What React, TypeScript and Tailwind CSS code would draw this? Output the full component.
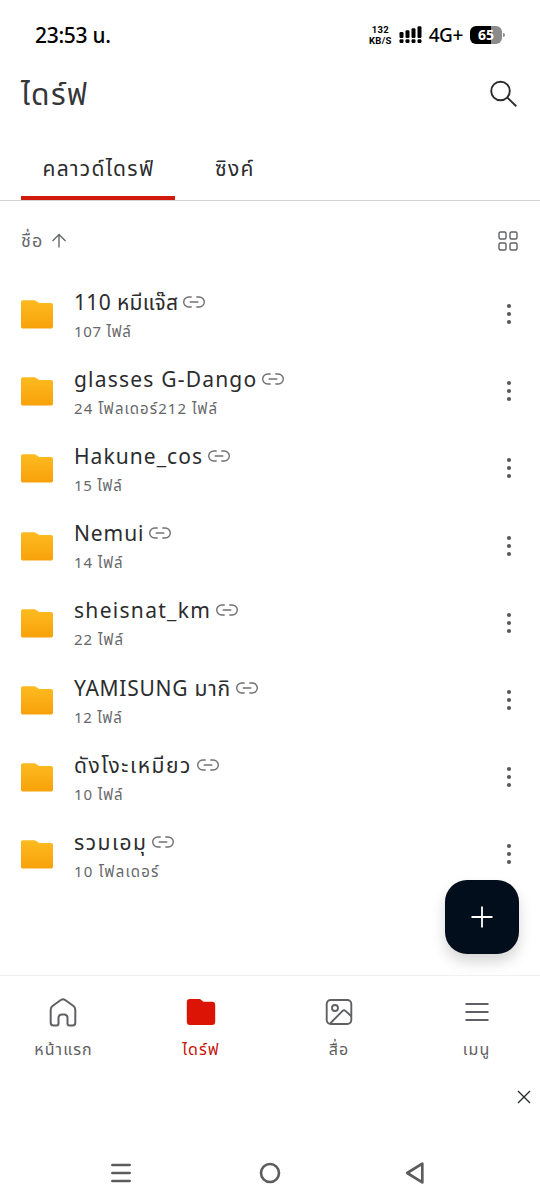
import React from "react";

type DriveFolder = {
    name: string;
    info: string;
    nameClass: string;
    infoClass: string;
};

const folders: DriveFolder[] = [
    { name: "110 หมีแจ๊ส", info: "107 ไฟล์", nameClass: "tracking-[0.35px]", infoClass: "tracking-[0.7px]" },
    { name: "glasses G-Dango", info: "24 โฟลเดอร์212 ไฟล์", nameClass: "tracking-[1.2px]", infoClass: "tracking-[1.05px]" },
    { name: "Hakune_cos", info: "15 ไฟล์", nameClass: "tracking-[1.05px]", infoClass: "tracking-[0.75px]" },
    { name: "Nemui", info: "14 ไฟล์", nameClass: "tracking-[0.9px]", infoClass: "tracking-[0.9px]" },
    { name: "sheisnat_km", info: "22 ไฟล์", nameClass: "tracking-[1.3px]", infoClass: "tracking-[1px]" },
    { name: "YAMISUNG มากิ", info: "12 ไฟล์", nameClass: "tracking-[0.75px]", infoClass: "tracking-[0.75px]" },
    { name: "ดังโงะเหมียว", info: "10 ไฟล์", nameClass: "tracking-[1.55px]", infoClass: "tracking-[0.9px]" },
    { name: "รวมเอมุ", info: "10 โฟลเดอร์", nameClass: "tracking-[1.5px]", infoClass: "tracking-[1.2px]" },
];

function FolderIcon() {
    return (
        <svg width="32" height="29" viewBox="0 0 32 29" className="shrink-0">
            <defs>
                <linearGradient id="folder" x1="0" y1="0" x2="0" y2="1">
                    <stop offset="0" stopColor="#fdbb1f" />
                    <stop offset="1" stopColor="#f8a10a" />
                </linearGradient>
            </defs>
            <path
                fill="url(#folder)"
                d="M2 0.3H13.2C14 0.3 14.6 0.5 15.2 1L17.4 2.4C18 2.9 18.5 3 19.3 3H30C31.2 3 32 3.8 32 5V26.5C32 27.8 31.2 28.6 30 28.6H2C0.8 28.6 0 27.8 0 26.5V2.3C0 1.1 0.8 0.3 2 0.3Z"
            />
        </svg>
    );
}

function LinkIcon() {
    return (
        <svg width="22" height="12" viewBox="0 0 22 12" fill="none" stroke="#6f7072" strokeWidth="1.4" strokeLinecap="round" className="shrink-0">
            <path d="M8.2 1H5.7a5 5 0 0 0 0 10H8.2M13.8 1h2.5a5 5 0 0 1 0 10H13.8M7.2 6h7.6" />
        </svg>
    );
}

function FolderRow({ folder }: { folder: DriveFolder }) {
    return (
        <li className="flex h-[77.2px] items-start pl-[21px] pr-7">
            <div className="pt-[24.4px]">
                <FolderIcon />
            </div>
            <div className="ml-[21px] flex-1 whitespace-nowrap">
                <div className="mt-[11px] flex h-[30px] items-center gap-[5px]">
                    <span className={`text-[21px] leading-[30px] text-[#2b2c2e] ${folder.nameClass}`}>{folder.name}</span>
                    <LinkIcon />
                </div>
                <p className={`text-[15px] leading-[28px] text-[#66676a] ${folder.infoClass}`}>{folder.info}</p>
            </div>
            <svg width="6" height="22" viewBox="0 0 6 22" fill="#58595c" className="mt-[27.4px]">
                <circle cx="3" cy="3" r="2.1" />
                <circle cx="3" cy="11" r="2.1" />
                <circle cx="3" cy="19" r="2.1" />
            </svg>
        </li>
    );
}

function StatusBar() {
    return (
        <div className="flex h-[70px] items-center pl-[35px] pr-[35px] text-black">
            <span className="text-[21px] font-medium leading-none tracking-[-0.3px]">23:53 น.</span>
            <div className="ml-auto flex items-center">
                <div className="text-center font-['Roboto',sans-serif] text-[9.5px] font-bold leading-[11px] tracking-[0.3px]">
                    <div>132</div>
                    <div>KB/S</div>
                </div>
                <svg width="23" height="18" viewBox="0 0 23 18" className="ml-[7px]">
                    <rect x="0.5" y="6" width="4" height="6" rx="1.2" />
                    <rect x="6.5" y="4.3" width="4" height="7.7" rx="1.2" />
                    <rect x="12.5" y="2.2" width="4" height="9.8" rx="1.2" />
                    <rect x="18.5" y="0.3" width="4" height="11.7" rx="1.2" />
                    <rect x="0.5" y="13.3" width="4" height="3.6" rx="1.2" />
                    <rect x="6.5" y="13.3" width="4" height="3.6" rx="1.2" />
                    <rect x="12.5" y="13.3" width="4" height="3.6" rx="1.2" />
                    <rect x="18.5" y="13.3" width="4" height="3.6" rx="1.2" />
                </svg>
                <span className="ml-[7px] text-[19px] font-medium leading-none tracking-[-0.4px]">4G+</span>
                <div className="ml-[7px] flex h-[18px] w-[32px] items-center justify-center rounded-[6px] bg-linear-to-r from-black from-65% to-[#8b8b8b] to-65% text-[14px] font-bold leading-none text-white">
                    65
                </div>
                <div className="ml-px h-1 w-[2px] rounded-r-full bg-[#8b8b8b]" />
            </div>
        </div>
    );
}

function BottomNav() {
    return (
        <nav className="-mx-[6px] grid h-[100px] grid-cols-4 border-t border-[#f0f0f0] text-[16px] leading-6 tracking-[1.1px] text-[#5f6063]">
            <div className="flex flex-col items-center pt-[22px]">
                <svg width="28" height="30" viewBox="0 0 28 30" fill="none" stroke="currentColor" strokeWidth="2" strokeLinejoin="round">
                    <path d="M12.2 1.8Q14 .7 15.8 1.8L24.5 8Q26.3 9.4 26.3 11.5V24.8Q26.3 27.6 23.5 27.6H20.5Q18.5 27.6 18.5 25.6V20Q18.5 16.5 15 16.5H13Q9.5 16.5 9.5 20V25.6Q9.5 27.6 7.5 27.6H4.5Q1.7 27.6 1.7 24.8V11.5Q1.7 9.4 3.5 8Z" />
                </svg>
                <span className="mt-[9px] pl-px">หน้าแรก</span>
            </div>
            <div className="flex flex-col items-center pt-[22px] text-[#c4150c]">
                <svg width="30" height="30" viewBox="0 0 30 30" fill="#dc1405">
                    <path d="M4 1H13.2Q14.5 1 15.3 2L16.3 3Q17 3.8 18.2 3.8H26Q29.2 3.8 29.2 7V23.5Q29.2 27 26 27H4Q.8 27 .8 23.5V4.3Q.8 1 4 1Z" />
                </svg>
                <span className="mt-[9px]">ไดร์ฟ</span>
            </div>
            <div className="flex flex-col items-center pt-[22px]">
                <svg width="28" height="30" viewBox="0 0 28 30" fill="none" stroke="currentColor" strokeWidth="1.9" strokeLinecap="round" strokeLinejoin="round">
                    <rect x="1.7" y="2" width="24.6" height="24" rx="4" />
                    <circle cx="10" cy="10" r="3" />
                    <path d="M5.6 25L17.6 12.9Q19 11.6 20.4 12.9L26 18" />
                </svg>
                <span className="mt-[9px]">สื่อ</span>
            </div>
            <div className="flex flex-col items-center pr-px pt-[22px]">
                <svg width="24" height="30" viewBox="0 0 24 30" fill="none" stroke="currentColor" strokeWidth="1.9">
                    <path d="M0.5 6H23.5M0.5 14H23.5M0.5 22H23.5" />
                </svg>
                <span className="mt-[9px]">เมนู</span>
            </div>
        </nav>
    );
}

export default function App() {
    return (
        <div className="flex h-[1200px] w-[540px] flex-col overflow-hidden bg-white font-['Noto_Sans','Noto_Sans_Thai',sans-serif]">
            <StatusBar />

            <header className="flex h-[66px] items-start justify-between pl-[21px] pr-[22px]">
                <h1 className="mt-[3px] text-[30px] leading-[42px] tracking-[1.3px] text-[#353638]">ไดร์ฟ</h1>
                <svg width="29" height="29" viewBox="0 0 29 29" fill="none" stroke="#2b2c2e" strokeWidth="1.9" className="mt-[10px]">
                    <circle cx="11.5" cy="11" r="9.3" />
                    <path d="M18.3 17.6L27.3 26.3" />
                </svg>
            </header>

            <div className="flex h-[65px] border-b border-[#d3d3d3] pl-[21px] text-[21px] leading-[64px] tracking-[1.3px] text-[#2b2c2e]">
                <div className="w-[154px] border-b-4 border-[#d11a0c] pl-px text-center">คลาวด์ไดรฟ์</div>
                <div className="ml-[40px]">ซิงค์</div>
            </div>

            <div className="flex h-[74.6px] items-center pl-[21px] pr-[22px] pt-[5px]">
                <span className="-mt-px text-[18px] leading-6 tracking-[1.1px] text-[#66676a]">ชื่อ</span>
                <svg width="16" height="16" viewBox="0 0 16 16" fill="none" stroke="#66676a" strokeWidth="1.4" className="ml-[8px]">
                    <path d="M8 14.5V2M1.5 8L8 1.5L14.5 8" />
                </svg>
                <svg width="20" height="20" viewBox="0 0 20 20" fill="none" stroke="#606164" strokeWidth="1.4" className="ml-auto">
                    <rect x="1" y="1" width="7" height="7" rx="1.5" />
                    <rect x="12" y="1" width="7" height="7" rx="1.5" />
                    <rect x="1" y="12" width="7" height="7" rx="1.5" />
                    <rect x="12" y="12" width="7" height="7" rx="1.5" />
                </svg>
            </div>

            <main className="relative h-[699.4px]">
                <ul>
                    {folders.map((folder) => (
                        <FolderRow key={folder.name} folder={folder} />
                    ))}
                </ul>
                <button className="absolute right-[21.5px] top-[604.2px] flex h-[74px] w-[74px] items-center justify-center rounded-[22px] bg-[#020e1b] shadow-[0_8px_14px_rgba(0,0,0,0.16)]">
                    <svg width="22" height="22" viewBox="0 0 22 22" stroke="white" strokeWidth="1.8">
                        <path d="M11 .5V21.5M.5 11H21.5" />
                    </svg>
                </button>
            </main>

            <BottomNav />

            <div className="flex h-[71px] justify-end pr-[9px]">
                <svg width="14" height="14" viewBox="0 0 14 14" stroke="#2b2c2e" strokeWidth="1.4" className="mt-[15px]">
                    <path d="M1 1L13 13M13 1L1 13" />
                </svg>
            </div>

            <footer className="flex h-[54px] items-center pl-[111px]">
                <svg width="20" height="22" viewBox="0 0 20 22" stroke="#5c5c5c" strokeWidth="2.7" strokeLinecap="round">
                    <path d="M1.4 3H18.6M1.4 11H18.6M1.4 19H18.6" />
                </svg>
                <svg width="22" height="22" viewBox="0 0 22 22" fill="none" stroke="#5c5c5c" strokeWidth="2.6" className="ml-[127.5px]">
                    <circle cx="11" cy="11" r="9" />
                </svg>
                <svg width="20" height="24" viewBox="0 0 20 24" fill="none" stroke="#5c5c5c" strokeWidth="2.7" strokeLinejoin="round" className="ml-[124.5px]">
                    <path d="M17.3 2.6V21.4L2.2 12Z" />
                </svg>
            </footer>
        </div>
    );
}
